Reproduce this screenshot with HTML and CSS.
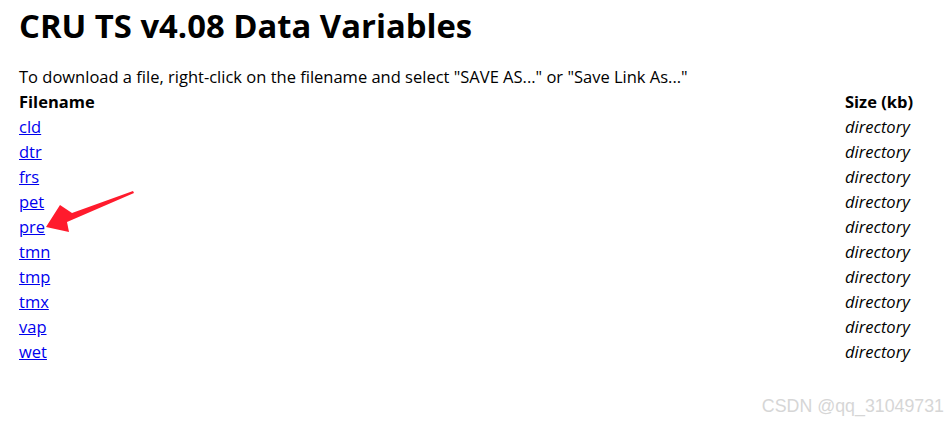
FILE: index.html
```html
<!DOCTYPE html>
<html>
<head>
<meta charset="utf-8">
<link rel="stylesheet" href="styles.css">
</head>
<body>
<div class="page">
  <h1 class="title">CRU TS v4.08 Data Variables</h1>
  <p class="note">To download a file, right-click on the filename and select "SAVE AS..." or "Save Link As..."</p>
  <div class="table">
    <div class="row head"><span class="name">Filename</span><span class="size">Size (kb)</span></div>
    <div class="row"><a class="name" href="#">cld</a><span class="size">directory</span></div>
    <div class="row"><a class="name" href="#">dtr</a><span class="size">directory</span></div>
    <div class="row"><a class="name" href="#">frs</a><span class="size">directory</span></div>
    <div class="row"><a class="name" href="#">pet</a><span class="size">directory</span></div>
    <div class="row"><a class="name" href="#">pre</a><span class="size">directory</span></div>
    <div class="row"><a class="name" href="#">tmn</a><span class="size">directory</span></div>
    <div class="row"><a class="name" href="#">tmp</a><span class="size">directory</span></div>
    <div class="row"><a class="name" href="#">tmx</a><span class="size">directory</span></div>
    <div class="row"><a class="name" href="#">vap</a><span class="size">directory</span></div>
    <div class="row"><a class="name" href="#">wet</a><span class="size">directory</span></div>
  </div>
</div>
<svg class="arrow" width="947" height="422" viewBox="0 0 947 422">
  <polygon points="133,191 72,213 60,205 46,227 69,232 67,222 134,193" fill="#ff1b2d"/>
</svg>
<div class="watermark">CSDN @qq_31049731</div>
</body>
</html>
```
FILE: styles.css
```css
html, body {
  margin: 0;
  padding: 0;
  background: #fff;
}
body {
  width: 947px;
  height: 422px;
  position: relative;
  overflow: hidden;
  font-family: "Open Sans", "Noto Sans", sans-serif;
  color: #000;
}
.page {
  padding: 0 31px 0 19px;
}
.title {
  margin: 0;
  padding-top: 4px;
  font-size: 32.8px;
  line-height: 44px;
  font-weight: 700;
}
.note {
  margin: 16px 0 0;
  font-size: 16.5px;
  line-height: 25px;
}
.table {
  display: flex;
  flex-direction: column;
}
.row {
  display: flex;
  justify-content: space-between;
  font-size: 16.5px;
  line-height: 25px;
}
.head {
  font-weight: 700;
}
.name {
  color: #0000ee;
  text-decoration: underline;
}
.head .name {
  color: #000;
  text-decoration: none;
}
.size {
  width: 71px;
  font-style: italic;
}
.head .size {
  font-style: normal;
}
.arrow {
  position: absolute;
  left: 0;
  top: 0;
  pointer-events: none;
}
.watermark {
  position: absolute;
  right: 3px;
  top: 396px;
  font-family: "Liberation Sans", Arial, sans-serif;
  font-size: 17.8px;
  color: #d6d6d6;
}
```
